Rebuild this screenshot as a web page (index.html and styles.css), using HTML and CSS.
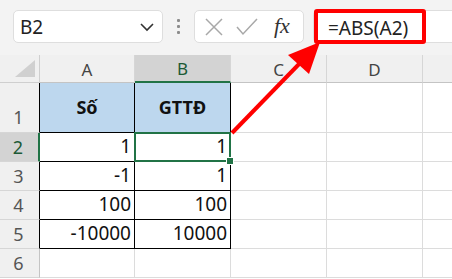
FILE: index.html
```html
<!DOCTYPE html>
<html>
<head>
<meta charset="utf-8">
<link rel="stylesheet" href="styles.css">
</head>
<body>
<div class="page">
  <div class="toolbar">
    <div class="namebox">
      <span class="nb-text">B2</span>
      <svg class="chev" width="16" height="10" viewBox="0 0 16 10"><polyline points="2,2 8,8 14,2" fill="none" stroke="#333" stroke-width="1.6"/></svg>
    </div>
    <div class="grip"><i></i><i></i><i></i></div>
    <div class="fbtns">
      <svg class="ico" width="20" height="20" viewBox="0 0 20 20"><path d="M2 2 L18 18 M18 2 L2 18" stroke="#a8a8a8" stroke-width="1.5" fill="none"/></svg>
      <svg class="ico" width="24" height="20" viewBox="0 0 24 20"><polyline points="2,10 8,17 22,2" stroke="#a8a8a8" stroke-width="1.5" fill="none"/></svg>
      <span class="fx">fx</span>
    </div>
    <div class="finput">
      <span class="ftext">=ABS(A2)</span>
      <div class="redbox"></div>
    </div>
  </div>

  <div class="sheet">
    <div class="c corner"><span class="tri"></span></div>
    <div class="c ch">A</div>
    <div class="c ch sel">B</div>
    <div class="c ch">C</div>
    <div class="c ch">D</div>
    <div class="c ch last"></div>

    <div class="c rh t tall">1</div>
    <div class="c t head">Số</div>
    <div class="c t head">GTTĐ</div>
    <div class="c"></div>
    <div class="c"></div>
    <div class="c last"></div>

    <div class="c rh t rsel">2</div>
    <div class="c t num">1</div>
    <div class="c t num active">1<span class="handle"></span></div>
    <div class="c"></div>
    <div class="c"></div>
    <div class="c last"></div>

    <div class="c rh t">3</div>
    <div class="c t num">-1</div>
    <div class="c t num">1</div>
    <div class="c"></div>
    <div class="c"></div>
    <div class="c last"></div>

    <div class="c rh t">4</div>
    <div class="c t num">100</div>
    <div class="c t num">100</div>
    <div class="c"></div>
    <div class="c"></div>
    <div class="c last"></div>

    <div class="c rh t">5</div>
    <div class="c t num">-10000</div>
    <div class="c t num">10000</div>
    <div class="c"></div>
    <div class="c"></div>
    <div class="c last"></div>

    <div class="c rh">6</div>
    <div class="c"></div>
    <div class="c"></div>
    <div class="c"></div>
    <div class="c"></div>
    <div class="c last"></div>
  </div>

  <svg class="arrow" width="452" height="279" viewBox="0 0 452 279">
    <line x1="232" y1="133" x2="302" y2="61" stroke="#ff0000" stroke-width="4"/>
    <polygon points="320,42 288,55 309,74" fill="#ff0000"/>
  </svg>
</div>
</body>
</html>
```

FILE: styles.css
```css
html, body {
  margin: 0;
  padding: 0;
  background: #ffffff;
}

.page {
  position: relative;
  width: 452px;
  height: 279px;
  overflow: hidden;
  font-family: "Noto Sans", "Liberation Sans", sans-serif;
}

.toolbar {
  height: 55px;
  box-sizing: border-box;
  background: #f3f3f3;
  display: flex;
  align-items: flex-start;
  padding: 10px 0 0 13px;
}

.namebox {
  width: 150px;
  height: 33px;
  box-sizing: border-box;
  background: #fff;
  border: 1px solid #dedede;
  border-radius: 5px;
  display: flex;
  align-items: center;
  justify-content: space-between;
  padding: 0 7px 0 6px;
}

.nb-text {
  font-size: 19px;
  color: #222;
  line-height: 1;
  padding-top: 1px;
}

.chev {
  display: block;
}

.grip {
  width: 31px;
  height: 33px;
  display: flex;
  flex-direction: column;
  align-items: center;
  justify-content: center;
  gap: 3px;
}

.grip i {
  display: block;
  width: 3px;
  height: 3px;
  background: #8c8c8c;
  border-radius: 1px;
}

.fbtns {
  width: 110px;
  height: 33px;
  box-sizing: border-box;
  background: #fff;
  border: 1px solid #dedede;
  border-radius: 5px;
  display: flex;
  align-items: center;
  padding-left: 9px;
  gap: 11px;
}

.ico {
  display: block;
}

.fx {
  font-family: "Liberation Serif", "DejaVu Serif", serif;
  font-style: italic;
  font-size: 22px;
  color: #333;
  line-height: 1;
  margin-left: 4px;
  padding-bottom: 2px;
}

.finput {
  position: relative;
  flex: 1;
  height: 33px;
  margin-left: 9px;
  box-sizing: border-box;
  background: #fff;
  border: 1px solid #dedede;
  border-right: none;
  border-radius: 5px 0 0 5px;
  display: flex;
  align-items: center;
  padding-left: 14px;
}

.ftext {
  font-size: 19px;
  color: #222;
  line-height: 1;
  padding-top: 3px;
}

.redbox {
  position: absolute;
  left: 0;
  top: -2px;
  width: 112px;
  height: 35px;
  box-sizing: border-box;
  border: 4px solid #ff0000;
  border-radius: 3px;
}

.sheet {
  display: grid;
  grid-template-columns: 40px 95px 96px 96px 96px 29px;
  grid-template-rows: 28px 50px 29px 29px 29px 29px 29px 10px;
}

.c {
  box-sizing: border-box;
  border-right: 1px solid #dcdcdc;
  border-bottom: 1px solid #dcdcdc;
  position: relative;
}

.c.last {
  border-right: none;
}

.corner {
  background: #f0f0f0;
  border-right-color: #cfcfcf;
  border-bottom-color: #cfcfcf;
}

.tri {
  position: absolute;
  left: 15px;
  top: 5px;
  width: 20px;
  height: 17px;
  background: #d0d0d0;
  clip-path: polygon(100% 0, 100% 100%, 0 100%);
}

.ch {
  background: #f0f0f0;
  border-right-color: #d6d6d6;
  border-bottom-color: #c4c4c4;
  display: flex;
  align-items: center;
  justify-content: center;
  font-size: 17px;
  color: #444;
  padding-top: 1px;
}

.ch.sel {
  background: #d3d3d3;
  border-bottom: 2px solid #217346;
  color: #1c5a36;
}

.rh {
  background: #f0f0f0;
  border-right-color: #c4c4c4;
  border-bottom-color: #d6d6d6;
  display: flex;
  align-items: center;
  justify-content: center;
  font-size: 18px;
  color: #555;
  padding-right: 2px;
}

.rh.tall {
  align-items: flex-end;
  padding-bottom: 3px;
}

.rh.t {
  border-right-color: #000;
}

.rh.rsel {
  background: #d3d3d3;
  border-right: 2px solid #217346;
  color: #1c5a36;
}

.c.t:not(.rh) {
  border-right-color: #000;
  border-bottom-color: #000;
}

.head {
  background: #bdd7ee;
  display: flex;
  align-items: center;
  justify-content: center;
  font-weight: bold;
  font-size: 18px;
  color: #111;
  padding-bottom: 2px;
}

.num {
  display: flex;
  align-items: flex-end;
  justify-content: flex-end;
  font-size: 19px;
  color: #111;
  line-height: 1;
  padding: 0 3px 5px 0;
}

.active::after {
  content: "";
  position: absolute;
  top: -1px;
  left: -1px;
  right: -1px;
  bottom: -1px;
  border: 2px solid #217346;
}

.handle {
  position: absolute;
  right: -4px;
  bottom: -4px;
  width: 6px;
  height: 6px;
  background: #217346;
  border: 1px solid #fff;
  z-index: 2;
}

.arrow {
  position: absolute;
  left: 0;
  top: 0;
  pointer-events: none;
}
```
